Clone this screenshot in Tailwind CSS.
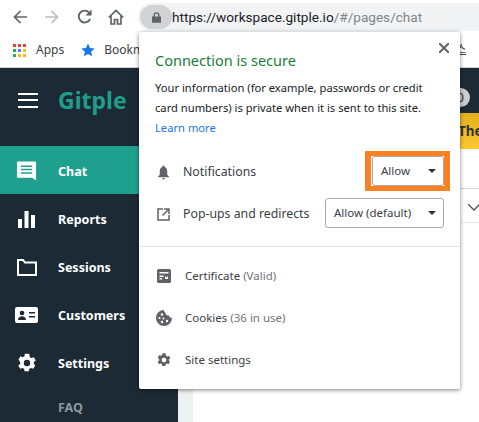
<!DOCTYPE html>
<html><head><meta charset="utf-8"><script src="https://cdn.jsdelivr.net/npm/@tailwindcss/browser@4"></script></head>
<body class="m-0">
<div class="relative w-[479px] h-[422px] overflow-hidden bg-white font-['Noto_Sans','Open_Sans',sans-serif]">
  <!-- toolbar -->
  <div class="h-[33px] flex items-center bg-white pl-[13px]">
    <svg class="w-[14px] h-[14px] mr-[18px]" viewBox="0 0 14 14" fill="none" stroke="#5f6368" stroke-width="1.700"><path d="M14 7H1.500M7.500 1 1.500 7l6 6"/></svg>
    <svg class="w-[14px] h-[14px] mr-[18px]" viewBox="0 0 14 14" fill="none" stroke="#bdbdbd" stroke-width="1.700"><path d="M0 7h12.500M6.500 1l6 6-6 6"/></svg>
    <svg class="w-[15px] h-[15px] mr-[16px]" viewBox="0 0 16 16" fill="none" stroke="#5f6368" stroke-width="2"><path d="M14 10.500A6.300 6.300 0 1 1 13 4"/><path d="M15.500 .5v6.500H9z" fill="#5f6368" stroke="none"/></svg>
    <svg class="w-[16px] h-[16px]" viewBox="0 0 16 16" fill="none" stroke="#5f6368" stroke-width="1.700"><path d="M.7 8.500 8 1.500l7.300 7M3 7v8h3.500v-4.500h3V15H13V7"/></svg>
    <div class="absolute left-[138px] top-[3px] right-0 h-[28px] bg-[#f1f3f4] flex items-center rounded-l-[14px]">
      <div class="w-[32px] h-[24px] ml-[2px] rounded-full bg-[#d2d3d4] flex items-center justify-center">
        <svg class="w-[9px] h-[11px]" viewBox="0 0 12 14" fill="#5f6368"><path d="M2 5.500V4a4 4 0 0 1 8 0v1.500h2V14H0V5.500zM3.800 5.500h4.400V4a2.200 2.200 0 0 0-4.400 0z"/></svg>
      </div>
      <span class="font-['Roboto',sans-serif] text-[13.600px] text-[#202124] whitespace-nowrap">https://workspace.gitple.io<span class="text-[#80868b]">/#/pages/chat</span></span>
    </div>
  </div>
  <!-- bookmarks -->
  <div class="h-[35px] flex items-center pl-[13px] border-b border-[#d0d0d0] text-[12px] text-[#3c4043]">
    <span class="grid grid-cols-3 gap-[2px] w-[13px] h-[13px] mr-[10px]">
      <i class="bg-[#ea4335]"></i><i class="bg-[#ea4335]"></i><i class="bg-[#ea4335]"></i>
      <i class="bg-[#34a853]"></i><i class="bg-[#4285f4]"></i><i class="bg-[#fbbc05]"></i>
      <i class="bg-[#34a853]"></i><i class="bg-[#fbbc05]"></i><i class="bg-[#fbbc05]"></i>
    </span>
    <span>Apps</span>
    <svg class="w-[14px] h-[14px] ml-[17px] mr-[9px]" viewBox="0 0 24 24" fill="#1a73e8"><path d="M12 1l3.400 7.500 8 .900-6 5.400 1.700 8L12 18.700 4.900 22.800l1.700-8-6-5.400 8-.900z"/></svg>
    <span>Bookmarks</span>
  </div>
  <!-- app -->
  <div class="flex h-[354px]">
    <aside class="w-[178px] shrink-0 bg-[#1c2a36] text-white">
      <div class="h-[64px] mb-[14px] flex items-center pl-[18px]">
        <div class="w-[20px] flex flex-col gap-[4.500px]"><i class="h-[2px] bg-white"></i><i class="h-[2px] bg-white"></i><i class="h-[2px] bg-white"></i></div>
        <span class="ml-[20px] text-[23px] font-bold text-[#1f9d8b] leading-none">Gitple</span>
      </div>
      <nav class="text-[12.500px] font-bold">
        <a class="h-[48px] flex items-center bg-[#1fa08e] pt-[2px]">
          <span class="w-[58px] pr-[5px] flex justify-center"><svg class="w-[21px] h-[20px]" viewBox="0 0 22 20"><path fill="#fff" d="M2 0h18a1 1 0 0 1 1 1v14l0 5-4-3H2a1 1 0 0 1-1-1V1a1 1 0 0 1 1-1z"/><path stroke="#1fa08e" stroke-width="1.500" d="M5 5h12M5 8.500h12M5 12h12"/></svg></span><span class="pt-[2px]">Chat</span></a>
        <a class="h-[48px] flex items-center pt-[2px]">
          <span class="w-[58px] pr-[5px] flex justify-center"><svg class="w-[17px] h-[17px]" viewBox="0 0 17 17" fill="#fff"><path d="M0 8h4v9H0zM6.500 0h4v17h-4zM13 4h4v13h-4z"/></svg></span><span class="pt-[2px]">Reports</span></a>
        <a class="h-[48px] flex items-center pt-[2px]">
          <span class="w-[58px] pr-[5px] flex justify-center"><svg class="w-[20px] h-[17px]" viewBox="0 0 20 17" fill="none" stroke="#fff" stroke-width="2"><path d="M1 16V1h5l2 2.500h11V16z"/></svg></span><span class="pt-[2px]">Sessions</span></a>
        <a class="h-[48px] flex items-center pt-[2px]">
          <span class="w-[58px] pr-[5px] flex justify-center"><svg class="w-[23px] h-[16px]" viewBox="0 0 23 16"><rect width="23" height="16" rx="2" fill="#fff"/><circle cx="7" cy="6" r="2.300" fill="#1c2a36"/><path fill="#1c2a36" d="M3 13c0-5 8-5 8 0zM14 5h6v1.600h-6zM14 9h6v1.600h-6z"/></svg></span><span class="pt-[2px]">Customers</span></a>
        <a class="h-[48px] flex items-center pt-[2px]">
          <span class="w-[58px] pr-[5px] flex justify-center"><svg class="w-[22px] h-[22px]" viewBox="0 0 24 24" fill="#fff"><path d="M19.400 13a7.600 7.600 0 0 0 0-2l2.200-1.700-2.200-3.700-2.500 1a7.600 7.600 0 0 0-1.800-1L14.400 2h-4.800l-.4 2.600a7.600 7.600 0 0 0-1.800 1l-2.500-1-2.200 3.700L4.600 11a7.600 7.600 0 0 0 0 2l-2.200 1.700 2.200 3.700 2.500-1a7.600 7.600 0 0 0 1.800 1l.4 2.600h4.800l.4-2.600a7.600 7.600 0 0 0 1.800-1l2.500 1 2.200-3.700zM12 15.500a3.500 3.500 0 1 1 0-7 3.500 3.500 0 0 1 0 7z"/></svg></span><span class="pt-[2px]">Settings</span></a>
        <a class="h-[40px] flex items-center pl-[58px] pt-[4px] text-[#8f979e]">FAQ</a>
      </nav>
    </aside>
    <div class="w-[15px] bg-[#eef1f2]"></div>
    <main class="flex-1 bg-white"></main>
  </div>
  <!-- right-hand page fragments -->
  <span class="absolute left-[456px] top-[40px] text-[11px] underline font-['Noto_Sans_CJK_KR',sans-serif] text-[#3c4043]">스</span>
  <div class="absolute left-[440px] top-[68px] right-0 h-[45px] bg-[#1c2a36]">
    <span class="absolute left-[11px] top-[20px] w-[19px] h-[19px] rounded-full bg-[#ccc] text-[12px] leading-[19px] text-center text-[#1c2a36]">0</span>
  </div>
  <div class="absolute left-[440px] top-[113px] right-0 h-[36px] bg-gradient-to-b from-[#e2b01f] to-[#fdc82e] text-[13.500px] font-bold text-[#333] leading-[36px] pl-[18px] whitespace-nowrap">The</div>
  <div class="absolute left-[461px] top-[188px] right-0 h-px bg-[#d8d8d8]"></div>
  <div class="absolute left-[461px] top-[222px] right-0 h-px bg-[#e8e8e8]"></div>
  <svg class="absolute left-[468px] top-[203px] w-[12px] h-[8px]" viewBox="0 0 12 8" fill="none" stroke="#555" stroke-width="1.300"><path d="M0 1l6 6 6-6"/></svg>
  <!-- popup -->
  <div class="absolute left-[139px] top-[32px] w-[321px] h-[357px] bg-white rounded-[2px] shadow-[0_1px_4px_rgba(0,0,0,0.5)] text-[#3c4043]">
    <svg class="absolute right-[11px] top-[11px] w-[10px] h-[10px]" viewBox="0 0 10 10" stroke="#5f6368" stroke-width="2"><path d="M0 0l10 10M10 0 0 10"/></svg>
    <div class="pl-[16px] pt-[18px]">
      <p class="text-[14.500px] leading-[20px] text-[#188038]">Connection is secure</p>
      <p class="mt-[8px] text-[11.200px] leading-[20px] text-[#202124] w-[275px]">Your information (for example, passwords or credit card numbers) is private when it is sent to this site.</p>
      <p class="text-[11.200px] leading-[20px] text-[#1a73e8]">Learn more</p>
    </div>
    <div class="absolute left-[18px] right-[16px] top-[122px] h-[36px] flex items-center text-[12.300px]">
      <svg class="w-[13px] h-[15px]" viewBox="0 0 14 15" fill="#5f6368"><path d="M7 0a1 1 0 0 1 1 1.200C10 2 11 3.500 11 6v4l2 2v.5H1V12l2-2V6c0-2.500 1-4 3-4.800A1 1 0 0 1 7 0zM5.500 13.500h3a1.500 1.500 0 0 1-3 0z"/></svg>
      <span class="ml-[13px]">Notifications</span>
    </div>
    <div class="absolute left-[18px] right-[16px] top-[164px] h-[36px] flex items-center text-[12.300px]">
      <svg class="w-[13px] h-[13px]" viewBox="0 0 13 13" fill="none" stroke="#5f6368" stroke-width="1.500"><path d="M6 1H1v11h11V7M7 1h5v5M12 1 5.500 7.500"/></svg>
      <span class="ml-[13px]">Pop-ups and redirects</span>
    </div>
    <div class="absolute left-[226px] top-[119px] w-[85px] h-[40px] border-x-[6px] border-y-[5px] border-[#fb8122]"></div>
    <div class="absolute left-[233px] top-[124px] w-[72px] h-[30px] border border-[#aaa] rounded-[3px] flex items-center justify-between pl-[8px] pr-[7px] text-[11.500px]">Allow<span class="w-0 h-0 border-x-[4px] border-x-transparent border-t-[4px] border-t-[#333]"></span></div>
    <div class="absolute left-[186px] top-[166px] w-[119px] h-[30px] border border-[#aaa] rounded-[3px] flex items-center justify-between pl-[8px] pr-[7px] text-[11.500px]">Allow (default)<span class="w-0 h-0 border-x-[4px] border-x-transparent border-t-[4px] border-t-[#333]"></span></div>
    <div class="absolute left-0 right-0 top-[214px] h-px bg-[#e4e4e4]"></div>
    <div class="absolute left-[18px] top-[233px] h-[22px] flex items-center text-[11.500px]">
      <svg class="w-[14px] h-[14px] mr-[14px]" viewBox="0 0 14 14"><rect width="14" height="14" rx="1.500" fill="#5f6368"/><path fill="#fff" d="M2.500 3h9v1.500h-9zM2.500 6.500h4V8h-4zM2.500 9h2.500v1.500H2.500zM8 7l1.500 1.500L11 7v3H8z"/></svg>
      <span>Certificate <span class="text-[#70757a]">(Valid)</span></span>
    </div>
    <div class="absolute left-[17px] top-[275px] h-[22px] flex items-center text-[11.500px]">
      <svg class="w-[16px] h-[16px] mr-[13px]" viewBox="0 0 16 16"><path fill="#5f6368" d="M8 0a8 8 0 1 0 8 8 3 3 0 0 1-3-2.500A3 3 0 0 1 9.500 3 3 3 0 0 1 8 0z"/><g fill="#fff"><circle cx="6" cy="4.500" r="1.200"/><circle cx="3.500" cy="8" r="1.100"/><circle cx="7.500" cy="8.500" r=".9"/><circle cx="6" cy="12" r="1.200"/><circle cx="11" cy="11" r="1.200"/></g></svg>
      <span>Cookies <span class="text-[#70757a]">(36 in use)</span></span>
    </div>
    <div class="absolute left-[17px] top-[317px] h-[22px] flex items-center text-[11.500px]">
      <svg class="w-[16px] h-[16px] mr-[13px]" viewBox="0 0 24 24" fill="#5f6368"><path d="M19.400 13a7.600 7.600 0 0 0 0-2l2.200-1.700-2.200-3.700-2.500 1a7.600 7.600 0 0 0-1.800-1L14.400 2h-4.800l-.4 2.600a7.600 7.600 0 0 0-1.800 1l-2.500-1-2.200 3.700L4.600 11a7.600 7.600 0 0 0 0 2l-2.200 1.700 2.200 3.700 2.500-1a7.600 7.600 0 0 0 1.800 1l.4 2.600h4.800l.4-2.600a7.600 7.600 0 0 0 1.800-1l2.500 1 2.200-3.700zM12 15.500a3.500 3.500 0 1 1 0-7 3.500 3.500 0 0 1 0 7z"/></svg>
      <span>Site settings</span>
    </div>
  </div>
</div>
</body></html>
